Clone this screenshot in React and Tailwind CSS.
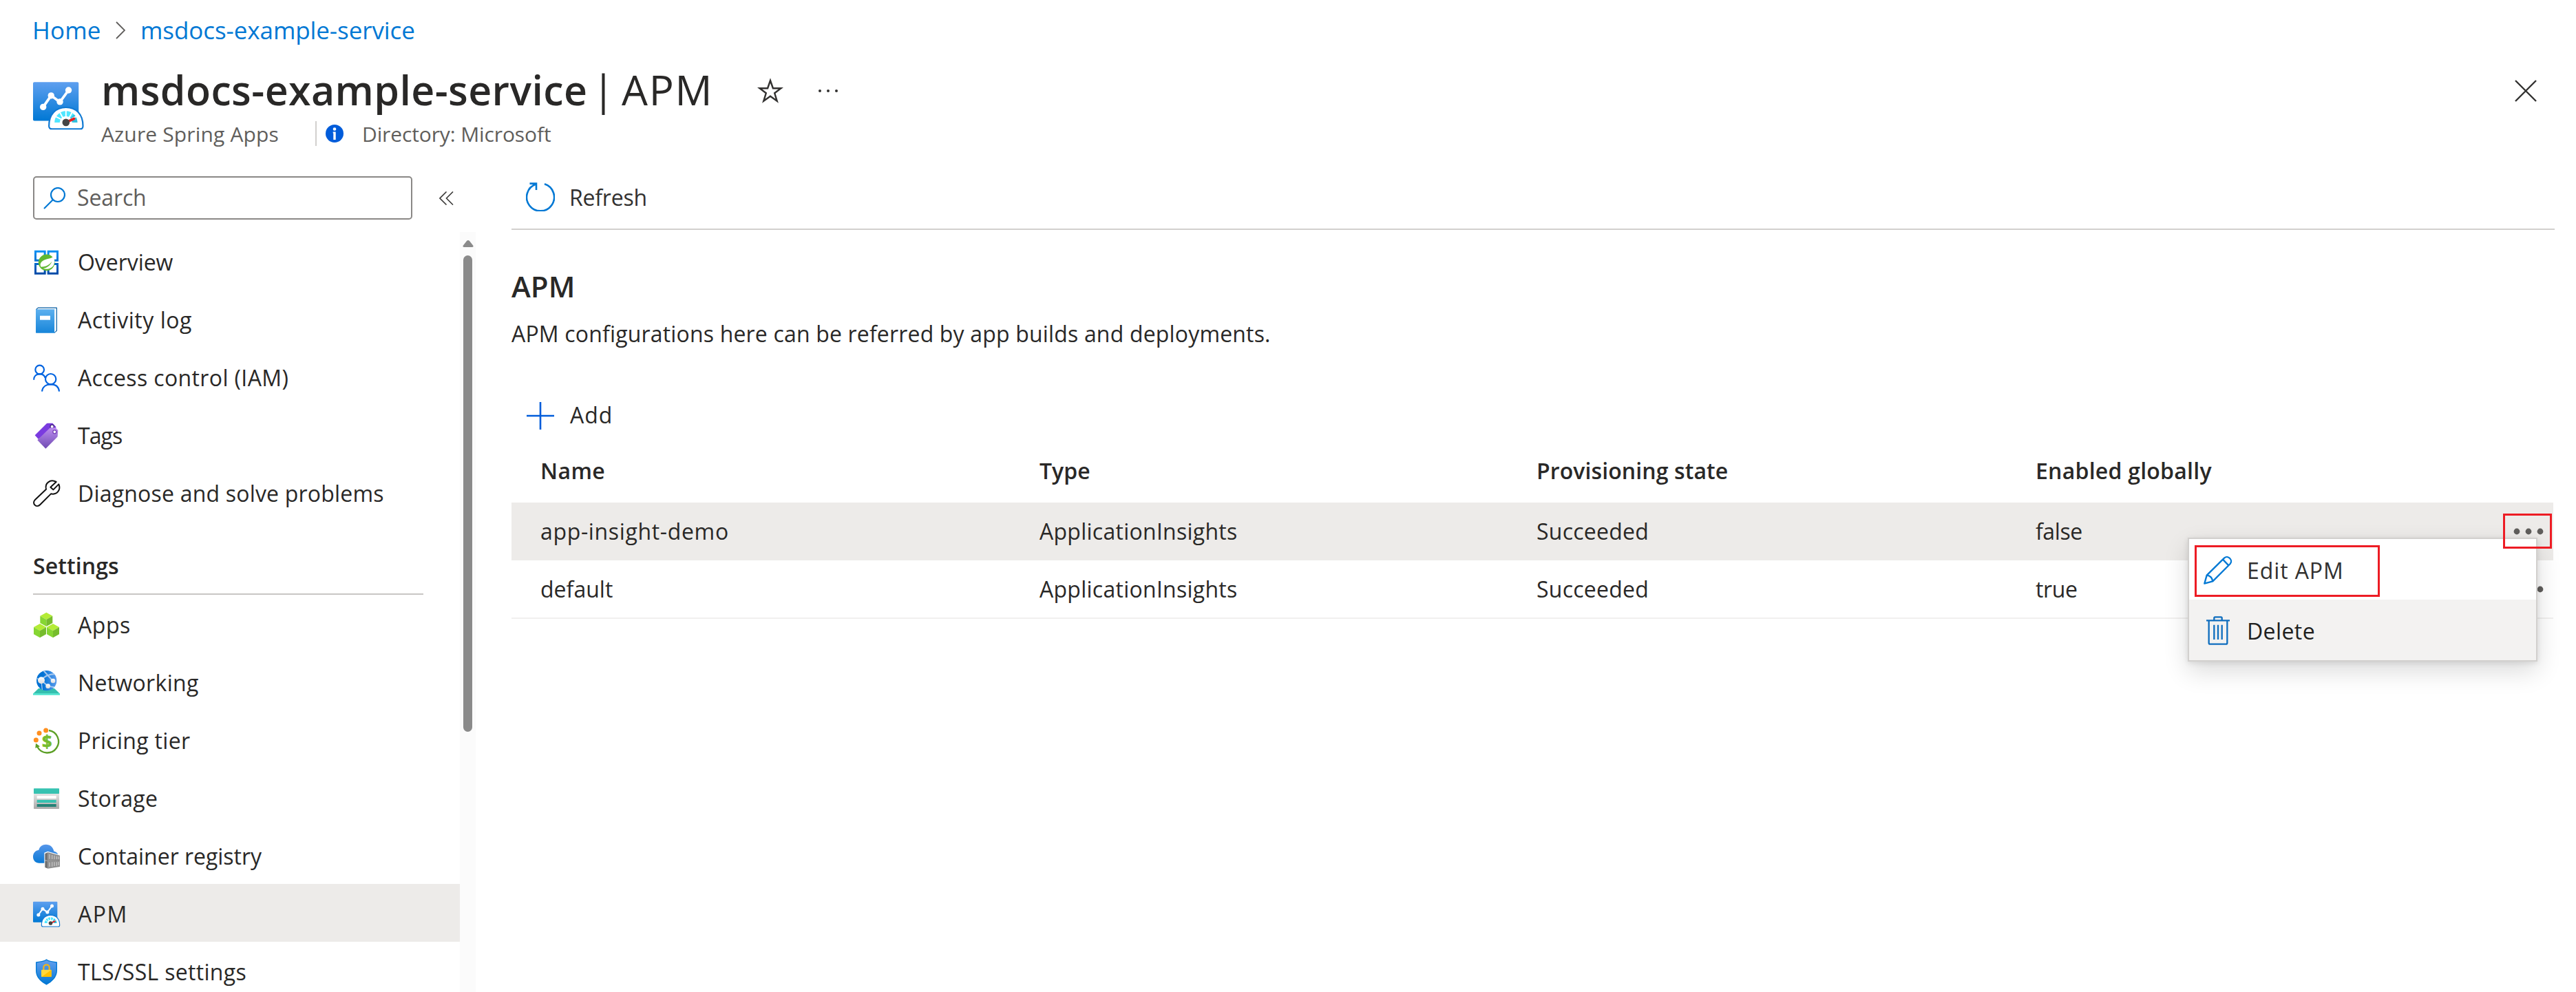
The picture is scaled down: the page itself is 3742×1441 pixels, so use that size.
import React from "react";

/* ---------- icons ---------- */

function NavSvg({ children, className = "h-[40px] w-[40px]" }) {
  return (
    <svg viewBox="0 0 120 120" className={`${className} shrink-0 overflow-visible`} fill="none">
      {children}
    </svg>
  );
}

function OverviewIcon() {
  return (
    <NavSvg>
      <defs>
        <linearGradient id="ovw" x1="0" y1="8" x2="0" y2="113" gradientUnits="userSpaceOnUse">
          <stop offset="0" stopColor="#0a92f5" />
          <stop offset="1" stopColor="#0048a5" />
        </linearGradient>
      </defs>
      <g stroke="url(#ovw)" strokeWidth="9">
        <path d="M10.500 12.500H51.500V51.500H10.500Z" />
        <path d="M66.500 12.500H106.500V51.500H66.500Z" />
        <path d="M10.500 67.500H51.500V108.500H10.500Z" />
        <path d="M66.500 67.500H106.500V108.500H66.500Z" />
      </g>
      <circle cx="59" cy="61" r="35.500" fill="#5fb832" />
      <path d="M90 33C82 45 62 43 47 51C33 58 28 70 35 80C52 79 70 74 82 56C76 74 60 84 44 87C60 93 82 88 90 72C96 58 93 44 90 33Z" fill="#fff" />
    </NavSvg>
  );
}

function ActivityIcon() {
  return (
    <NavSvg>
      <defs>
        <linearGradient id="act" x1="0" y1="0" x2="0" y2="1">
          <stop offset="0" stopColor="#5cb0ef" />
          <stop offset="1" stopColor="#1785d9" />
        </linearGradient>
      </defs>
      <path d="M14 13L22 6.500H103V106L94 114Z" fill="#fff" stroke="#00599f" strokeWidth="3.500" strokeLinejoin="round" />
      <rect x="12" y="13" width="83" height="103" rx="2" fill="url(#act)" />
      <rect x="93" y="14" width="4" height="98" fill="#e8f3fc" />
      <rect x="30" y="41" width="45" height="18" fill="#fff" />
    </NavSvg>
  );
}

function AccessIcon() {
  return (
    <NavSvg>
      <g stroke="#0063e0" strokeWidth="6.500">
        <circle cx="29" cy="24" r="19" />
        <path d="M3.500 68C3.500 52 14 43 29 43C40 43 50 48 53 60" />
        <circle cx="77" cy="65" r="23" />
        <path d="M39 119C41 99 56 88 77 88C98 88 112 99 114 119" />
      </g>
    </NavSvg>
  );
}

function TagsIcon() {
  return (
    <NavSvg>
      <defs>
        <linearGradient id="tag" x1="0" y1="24" x2="0" y2="116" gradientUnits="userSpaceOnUse">
          <stop offset="0" stopColor="#bd8df0" />
          <stop offset="1" stopColor="#6f4bb2" />
        </linearGradient>
      </defs>
      <path d="M8 58L60 6Q62 5 65 5H85L100 21L99 32L22 74L19 70Z" fill="#7a3bdf" />
      <circle cx="83" cy="20" r="8" fill="#fff" stroke="#4b2a86" strokeWidth="4" />
      <path d="M19 79L73 26Q75 25 78 25H98L109 36L107 62Q107 64 105 66L55 116Z" fill="url(#tag)" />
      <circle cx="94" cy="43" r="7.500" fill="#fff" stroke="#7a45b8" strokeWidth="4" />
    </NavSvg>
  );
}

function WrenchIcon() {
  return (
    <NavSvg>
      <path
        d="M101 9L76 32L88 43L112 19C122 42 106 67 78 61L31 108C16 124 -7 104 8 88L57 41C50 15 75 -5 101 9Z"
        stroke="#111"
        strokeWidth="6"
        strokeLinejoin="round"
      />
    </NavSvg>
  );
}

function Cube({ x, y }) {
  return (
    <g transform={`translate(${x} ${y})`}>
      <path d="M0 0L27 15L0 31L-27 15Z" fill="#b4ec36" />
      <path d="M-27 15L0 31V61L-27 46Z" fill="#86d633" />
      <path d="M27 15L0 31V61L27 46Z" fill="#76bc2d" />
    </g>
  );
}

function AppsIcon() {
  return (
    <NavSvg>
      <Cube x={58} y={5} />
      <Cube x={30} y={54} />
      <Cube x={87} y={54} />
    </NavSvg>
  );
}

function NetworkingIcon() {
  return (
    <NavSvg>
      <defs>
        <linearGradient id="net" x1="0" y1="0" x2="1" y2="0">
          <stop offset="0.300" stopColor="#0072d4" />
          <stop offset="1" stopColor="#5c9cec" />
        </linearGradient>
        <linearGradient id="node" x1="0" y1="0" x2="0" y2="1">
          <stop offset="0" stopColor="#ffffff" />
          <stop offset="1" stopColor="#dcdcdc" />
        </linearGradient>
        <clipPath id="globe">
          <circle cx="59" cy="50" r="44" />
        </clipPath>
      </defs>
      <path d="M24 84H93L117 107H0Z" fill="#35bfae" />
      <path d="M0 106H117V113H0Z" fill="#4fe4cf" />
      <circle cx="59" cy="50" r="44" fill="url(#net)" />
      <g clipPath="url(#globe)" stroke="#a8c9ef" strokeWidth="6">
        <path d="M36 49C46 32 66 22 100 20" />
        <path d="M42 2L86 51" />
        <path d="M36 49L65 74L100 80" />
        <path d="M16 40L36 49L40 90" strokeWidth="4" />
      </g>
      <circle cx="36" cy="49" r="15" fill="url(#node)" />
      <circle cx="87" cy="51" r="10" fill="url(#node)" />
      <circle cx="65" cy="74" r="10" fill="url(#node)" />
    </NavSvg>
  );
}

function PricingIcon() {
  return (
    <NavSvg>
      <path d="M69 15A49 49 0 1 1 19 87" stroke="#5c9f26" strokeWidth="7" />
      <path d="M12 71L30 85L10 92Z" fill="#5c9f26" />
      <circle cx="56" cy="15" r="10.500" fill="#ff8f1f" />
      <circle cx="27" cy="27" r="10.500" fill="#ff8f1f" />
      <circle cx="13" cy="57" r="10.500" fill="#ff8f1f" />
      <text
        x="61"
        y="90"
        textAnchor="middle"
        fill="#76bc2d"
        stroke="#76bc2d"
        strokeWidth="2"
        className="font-['Open_Sans',sans-serif] text-[76px] font-bold"
      >
        $
      </text>
    </NavSvg>
  );
}

function StorageIcon() {
  return (
    <NavSvg>
      <defs>
        <linearGradient id="sto" x1="0" y1="0" x2="0" y2="1">
          <stop offset="0" stopColor="#ececec" />
          <stop offset="1" stopColor="#a9a9a9" />
        </linearGradient>
      </defs>
      <rect x="3" y="30" width="111" height="75" rx="2" fill="url(#sto)" />
      <rect x="3" y="16" width="111" height="23" rx="2" fill="#37c2b1" />
      <rect x="17" y="48" width="84" height="12" fill="#fff" />
      <rect x="17" y="66" width="84" height="12" fill="#37c2b1" />
      <rect x="17" y="84" width="84" height="12" fill="#258277" />
    </NavSvg>
  );
}

function RegistryIcon() {
  return (
    <NavSvg>
      <defs>
        <linearGradient id="reg" x1="0" y1="0" x2="0" y2="1">
          <stop offset="0" stopColor="#5796ea" />
          <stop offset="1" stopColor="#0a7ad6" />
        </linearGradient>
      </defs>
      <path d="M27 89C11 89 0 77 0 62C0 45 10 34 25 32C29 16 41 8 56 8C75 8 88 20 91 38C103 40 112 50 112 64V89Z" fill="url(#reg)" />
      <path d="M49 44L64 38L118 53V108L64 115L49 109Z" fill="#fff" />
      <path d="M52 48L65 42V77L52 75Z" fill="#707070" />
      <path d="M52 80L65 81V113L52 108Z" fill="#707070" />
      <path d="M65 42L117 56V77L65 76Z" fill="#8f8f8f" />
      <path d="M65 80L117 80V105L65 113Z" fill="#8f8f8f" />
      <g stroke="#c4c4c4" strokeWidth="4">
        <path d="M72 51V71M83 54V72M93 56V73M103 59V73M111 61V73" />
        <path d="M72 86V105M83 85V104M93 85V102M103 85V101M111 84V99" />
      </g>
      <path d="M52 78H117" stroke="#4a4a4a" strokeWidth="3" />
    </NavSvg>
  );
}

function ApmIcon({ className, id }) {
  return (
    <NavSvg className={className}>
      <defs>
        <linearGradient id={id} x1="0" y1="0" x2="0" y2="1">
          <stop offset="0" stopColor="#5e9fef" />
          <stop offset="1" stopColor="#0078d4" />
        </linearGradient>
      </defs>
      <rect x="0" y="5" width="106" height="90" rx="3" fill={`url(#${id})`} />
      <path d="M23.500 63L42 36.500L62.500 51.500L82.500 24" stroke="#fff" strokeWidth="6" strokeLinejoin="round" />
      <g fill="#fff">
        <circle cx="23.500" cy="63" r="7.500" />
        <circle cx="42" cy="36.500" r="7.500" />
        <circle cx="62.500" cy="51" r="7.500" />
        <circle cx="82.500" cy="24" r="7.500" />
      </g>
      <path
        d="M44 114H110Q116 114 116 107C116 80 100 64 76.500 64C53 64 37 80 37 107Q37 114 44 114Z"
        fill="#fff"
        stroke="#0f79d3"
        strokeWidth="3.500"
      />
      <path d="M56 99A20.500 20.500 0 0 1 97 99" stroke="#50e6ff" strokeWidth="12" />
      <path d="M91 84.500A20.500 20.500 0 0 1 97 99" stroke="#32bedd" strokeWidth="12" />
      <path d="M76.500 72V88M48 83L66 92M61 73L69 88" stroke="#fff" strokeWidth="3" />
      <path d="M92 73L84 88M105 83L90 90" stroke="#fff" strokeWidth="3" />
      <path d="M76.500 99L95 90.500" stroke="#e81e1e" strokeWidth="6" strokeLinecap="round" />
      <circle cx="76.500" cy="99" r="8.500" fill="#454545" />
    </NavSvg>
  );
}

function TlsIcon() {
  return (
    <NavSvg>
      <defs>
        <linearGradient id="tls" x1="0" y1="0" x2="0" y2="1">
          <stop offset="0" stopColor="#669fee" />
          <stop offset="1" stopColor="#0078d4" />
        </linearGradient>
      </defs>
      <path
        d="M58.500 6C47 15 32 14 14 18V54C14 82 38 103 58.500 114C80 103 103 82 103 54V18C86 14 70 15 58.500 6Z"
        fill="url(#tls)"
        stroke="#0078d4"
        strokeWidth="4"
        strokeLinejoin="round"
      />
      <path d="M46 52V40C46 24 71 24 71 40V52" stroke="#f0b31c" strokeWidth="7" />
      <rect x="36" y="50" width="44" height="31" rx="2" fill="#ffd83c" />
      <path d="M80 50V79Q80 81 78 81H38Z" fill="#ffbf00" />
    </NavSvg>
  );
}

function Dots({ className, r, gap, color }) {
  return (
    <svg viewBox="0 0 44 10" className={className}>
      <circle cx={22 - gap} cy="5" r={r} fill={color} />
      <circle cx="22" cy="5" r={r} fill={color} />
      <circle cx={22 + gap} cy="5" r={r} fill={color} />
    </svg>
  );
}

/* ---------- side navigation ---------- */

const topItems = [
  { label: "Overview", icon: <OverviewIcon />, track: "tracking-[-0.05px]" },
  { label: "Activity log", icon: <ActivityIcon />, track: "tracking-[0.53px]" },
  { label: "Access control (IAM)", icon: <AccessIcon />, track: "tracking-[0.37px]" },
  { label: "Tags", icon: <TagsIcon />, track: "tracking-[-0.93px]" },
  { label: "Diagnose and solve problems", icon: <WrenchIcon />, track: "tracking-[0.2px]" },
];

const settingsItems = [
  { label: "Apps", icon: <AppsIcon />, track: "tracking-[0.54px]" },
  { label: "Networking", icon: <NetworkingIcon />, track: "tracking-[0.32px]" },
  { label: "Pricing tier", icon: <PricingIcon />, track: "tracking-[0.31px]" },
  { label: "Storage", icon: <StorageIcon />, track: "tracking-[0.26px]" },
  { label: "Container registry", icon: <RegistryIcon />, track: "tracking-[-0.03px]" },
  { label: "APM", icon: <ApmIcon id="apm-nav" />, track: "tracking-[1.5px]", active: true },
  { label: "TLS/SSL settings", icon: <TlsIcon />, track: "tracking-[0.31px]" },
];

function NavItem({ label, icon, track, active, offset = "pt-[1px]" }) {
  return (
    <li className={`flex h-[84px] shrink-0 items-center gap-[25px] pl-[48px] ${offset} ${active ? "bg-[#edebe9]" : ""}`}>
      {icon}
      <span className={`whitespace-nowrap ${track}`}>{label}</span>
    </li>
  );
}

function Sidebar() {
  return (
    <aside className="flex w-[691px] shrink-0 flex-col pt-[20px]">
      <div className="flex h-[63px] shrink-0 items-center pl-[48px]">
        <div className="flex h-[63px] w-[551px] items-center rounded-[5px] border-2 border-[#8a8886] pl-[13px] text-[#605e5c]">
          <svg viewBox="0 0 32 32" className="h-[32px] w-[32px]" fill="none" stroke="#0078d4" strokeWidth="2.200">
            <circle cx="21" cy="11" r="10" />
            <path d="M14 18L1 31" />
          </svg>
          <span className="ml-[17px] pb-[1px] tracking-[-0.12px]">Search</span>
        </div>
        <svg viewBox="0 0 21 20" className="ml-[39px] h-[20px] w-[21px]" fill="none" stroke="#3b3a39" strokeWidth="1.600">
          <path d="M10.500 0.500L1 10L10.500 19.500M20 0.500L10.500 10L20 19.500" />
        </svg>
      </div>
      <div className="mt-[18px] flex h-[1104px] shrink-0 overflow-hidden">
        <nav className="w-[668px] shrink-0 pt-[1px]">
          <ul className="flex flex-col">
            {topItems.map((item) => (
              <NavItem key={item.label} {...item} />
            ))}
          </ul>
          <div className="ml-[48px] flex h-[106px] w-[567px] flex-col justify-end">
            <h3 className="pb-[18px] leading-[44px] font-semibold tracking-[0.1px]">Settings</h3>
            <div className="h-[2px] bg-[#c8c6c4]" />
          </div>
          <ul className="flex flex-col">
            {settingsItems.map((item) => (
              <NavItem key={item.label} {...item} offset="pt-[3px]" />
            ))}
          </ul>
        </nav>
        <div className="flex w-[23px] flex-col items-center bg-[#fbfbfb] pt-[12px]">
          <svg viewBox="0 0 16 10" className="h-[10px] w-[16px]" fill="#8a8a8a">
            <path d="M8 0Q9 0 10 1L15.500 8Q16 10 14 10H2Q0 10 0.500 8L6 1Q7 0 8 0Z" />
          </svg>
          <div className="mt-[12px] h-[692px] w-[13px] rounded-full bg-[#8a8a8a]" />
        </div>
      </div>
    </aside>
  );
}

/* ---------- content ---------- */

const rows = [
  { name: "app-insight-demo", nameTrack: "tracking-[0.65px]", enabled: "false", hovered: true },
  { name: "default", nameTrack: "tracking-[0.03px]", enabled: "true", hovered: false },
];

function ContextMenu() {
  return (
    <div className="absolute top-[51px] left-[2435px] h-[180px] w-[508px] border-2 border-[#d2d0ce] bg-white shadow-[0_14px_34px_rgba(0,0,0,0.14),0_2px_8px_rgba(0,0,0,0.1)]">
      <div className="flex h-[88px] items-center pt-[2px] pl-[21px] text-[#323130]">
        <svg viewBox="0 0 126 126" className="h-[42px] w-[42px] overflow-visible" fill="none" stroke="#0078d4" strokeWidth="7" strokeLinejoin="round">
          <path d="M4 122L14 86L90 11C106 -4 130 20 116 36L40 112Z" />
          <path d="M14 86C28 88 38 98 40 112M84 17L109 43" />
        </svg>
        <span className="mt-[2px] ml-[21px] tracking-[0.9px]">Edit APM</span>
      </div>
      <div className="flex h-[88px] items-center bg-[#f3f2f1] pt-[2px] pl-[25px] text-[#201f1e]">
        <svg viewBox="0 0 102 126" className="h-[42px] w-[34px]" fill="none" stroke="#106ebe" strokeWidth="7">
          <path d="M0 19H102M34 17V8Q34 4 38 4H64Q68 4 68 8V17M11 20V116Q11 122 17 122H85Q91 122 91 116V20M34 38V102M51 38V102M68 38V102" />
        </svg>
        <span className="mt-[2px] ml-[25px] tracking-[0.4px]">Delete</span>
      </div>
      <div className="absolute top-[9px] left-[8px] h-[75px] w-[269px] border-[3px] border-[#ed1c24]" />
    </div>
  );
}

function ApmTable() {
  const columns = "grid grid-cols-[725px_722px_725px_1fr] items-center pl-[42px]";
  return (
    <div className="w-[2966px]">
      <div className={`${columns} h-[92px] font-semibold`}>
        <span className="tracking-[0.4px]">Name</span>
        <span>Type</span>
        <span className="tracking-[0.1px]">Provisioning state</span>
        <span className="tracking-[0.24px]">Enabled globally</span>
      </div>
      <div className="relative">
        {rows.map((row) => (
          <div
            key={row.name}
            className={`${columns} ${row.hovered ? "h-[84px] bg-[#edebe9]" : "h-[85px] border-b-2 border-[#f1f0ef]"}`}
          >
            <span className={row.nameTrack}>{row.name}</span>
            <span className="tracking-[0.26px]">ApplicationInsights</span>
            <span className="tracking-[0.24px]">Succeeded</span>
            <div className="flex items-center justify-between pr-[14px]">
              <span className="tracking-[-0.4px]">{row.enabled}</span>
              <Dots className="h-[10px] w-[44px]" r={4.4} gap={17} color="#605e5c" />
            </div>
          </div>
        ))}
        <ContextMenu />
        <div className="absolute top-[16px] left-[2893px] h-[51px] w-[71px] border-[3px] border-[#ed1c24]" />
      </div>
    </div>
  );
}

function Main() {
  return (
    <main className="ml-[52px] flex w-[2968px] shrink-0 flex-col">
      <div className="flex h-[98px] items-center border-b-2 border-[#d2d0ce] pt-[3px] pl-[21px]">
        <svg viewBox="0 0 42 42" className="h-[42px] w-[42px]" fill="none" stroke="#0078d4" strokeWidth="2.600">
          <path d="M14.500 2.500A20 20 0 1 0 27 2.300" />
          <path d="M5.500 1.600H15V11" />
        </svg>
        <span className="mt-[2px] ml-[21px] tracking-[-0.21px] text-[#323130]">Refresh</span>
      </div>
      <h2 className="mt-[52px] text-[42px] leading-[60px] font-semibold tracking-[0.1px]">APM</h2>
      <p className="mt-[17px] leading-[44px] tracking-[0.17px]">
        APM configurations here can be referred by app builds and deployments.
      </p>
      <div className="mt-[74px] flex h-[44px] items-center pl-[22px]">
        <svg viewBox="0 0 40 40" className="mt-[2px] h-[40px] w-[40px]" fill="none" stroke="#015cda" strokeWidth="2.600">
          <path d="M20 0V40M0 20H40" />
        </svg>
        <span className="ml-[23px] tracking-[1px]">Add</span>
      </div>
      <div className="mt-[13px]">
        <ApmTable />
      </div>
    </main>
  );
}

/* ---------- header ---------- */

function Breadcrumb() {
  return (
    <nav className="flex h-[87px] items-center pl-[47px] text-[35px] text-[#0078d4]">
      <span className="w-[121px] tracking-[0.2px]">Home</span>
      <svg viewBox="0 0 14 26" className="h-[26px] w-[14px]" fill="none" stroke="#605e5c" strokeWidth="1.800">
        <path d="M1 1L13 13L1 25" />
      </svg>
      <span className="ml-[22px] whitespace-nowrap tracking-[-0.08px]">msdocs-example-service</span>
    </nav>
  );
}

function Header() {
  return (
    <header className="flex h-[149px] items-start pt-[3px] pl-[48px]">
      <ApmIcon id="apm-title" className="mt-[26px] h-[75px] w-[75px]" />
      <div className="ml-[24px] flex flex-col">
        <div className="flex h-[80px] items-center">
          <h1 className="flex items-center text-[60px] leading-[80px]">
            <span className="w-[713px] text-[59px] font-semibold tracking-[0.41px]">msdocs-example-service</span>
            <span className="w-[43px]">|</span>
            <span className="w-[197px] tracking-[1.7px]">APM</span>
          </h1>
          <svg viewBox="0 0 38 38" className="mt-[4px] h-[38px] w-[38px]" fill="none" stroke="#323130" strokeWidth="2.400">
            <path d="M19 4L22.900 15.200H34.500L25.200 22.300L28.700 33.800L19 26.800L9.300 33.800L12.800 22.300L3.500 15.200H15.100Z" />
          </svg>
          <Dots className="mt-[4px] ml-[43px] h-[10px] w-[44px]" r={2} gap={12} color="#323130" />
        </div>
        <div className="mt-[5px] flex h-[40px] items-center text-[30px] text-[#605e5c]">
          <span className="w-[311px] tracking-[0.15px]">Azure Spring Apps</span>
          <div className="-mt-[3px] h-[36px] w-[2px] bg-[#d2d0ce]" />
          <svg viewBox="0 0 26 26" className="-mt-[3px] ml-[13px] h-[26px] w-[26px]">
            <circle cx="13" cy="13" r="13" fill="#015cda" />
            <circle cx="13" cy="6.500" r="2.300" fill="#fff" />
            <path d="M10.700 10.500H14.700V22H11.300V12.500H10.700Z" fill="#fff" />
          </svg>
          <span className="ml-[27px] tracking-[-0.12px]">Directory: Microsoft</span>
        </div>
      </div>
      <svg viewBox="0 0 32 32" className="mt-[26px] mr-[57px] ml-auto h-[32px] w-[32px]" fill="none" stroke="#323130" strokeWidth="2.400">
        <path d="M1 1L31 31M31 1L1 31" />
      </svg>
    </header>
  );
}

export default function App() {
  return (
    <div className="flex h-[1441px] w-[3742px] flex-col overflow-hidden bg-white font-['Open_Sans',sans-serif] text-[32px] leading-[44px] text-[#292827]">
      <Breadcrumb />
      <Header />
      <div className="flex flex-1">
        <Sidebar />
        <Main />
      </div>
    </div>
  );
}
